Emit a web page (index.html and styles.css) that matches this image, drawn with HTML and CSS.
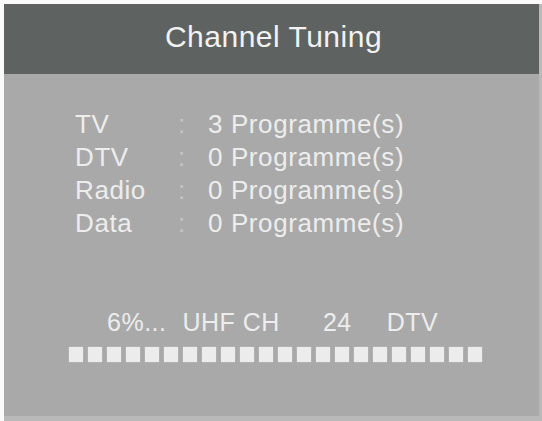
FILE: index.html
```html
<!DOCTYPE html>
<html>
<head>
<meta charset="utf-8">
<link rel="stylesheet" href="styles.css">
</head>
<body>
<div class="frame">
  <div class="panel">
    <div class="header">Channel Tuning</div>
    <div class="content">
      <div class="rows">
        <span class="label">TV</span><span class="colon">:</span><span class="value">3 Programme(s)</span>
        <span class="label">DTV</span><span class="colon">:</span><span class="value">0 Programme(s)</span>
        <span class="label">Radio</span><span class="colon">:</span><span class="value">0 Programme(s)</span>
        <span class="label">Data</span><span class="colon">:</span><span class="value">0 Programme(s)</span>
      </div>
      <div class="status">
        <span class="pct">6%...</span>
        <span class="band">UHF CH</span>
        <span class="chan">24</span>
        <span class="kind">DTV</span>
      </div>
      <div class="bar">
        <span class="cell"></span><span class="cell"></span><span class="cell"></span><span class="cell"></span>
        <span class="cell"></span><span class="cell"></span><span class="cell"></span><span class="cell"></span>
        <span class="cell"></span><span class="cell"></span><span class="cell"></span><span class="cell"></span>
        <span class="cell"></span><span class="cell"></span><span class="cell"></span><span class="cell"></span>
        <span class="cell"></span><span class="cell"></span><span class="cell"></span><span class="cell"></span>
        <span class="cell"></span><span class="cell"></span>
      </div>
    </div>
  </div>
</div>
</body>
</html>
```

FILE: styles.css
```css
html, body {
  margin: 0;
  padding: 0;
  background: #fafafa;
}
body {
  width: 542px;
  height: 421px;
  overflow: hidden;
  font-family: "Liberation Sans", Arial, sans-serif;
}
.frame {
  margin: 4px 0 0 4px;
  width: 538px;
  height: 417px;
  background: #b9b9b9;
}
.panel {
  width: 535px;
  height: 412px;
  background: #a9a9a9;
  display: flex;
  flex-direction: column;
}
.header {
  height: 70px;
  background: #5e6362;
  color: #f2f2f2;
  font-size: 30px;
  letter-spacing: 0.5px;
  display: flex;
  align-items: center;
  justify-content: center;
  padding-left: 4px;
  padding-bottom: 5px;
  box-sizing: border-box;
}
.content {
  display: flex;
  flex-direction: column;
  padding-top: 34px;
}
.rows {
  display: grid;
  grid-template-columns: 103px 30px auto;
  padding-left: 71px;
  font-size: 26px;
  line-height: 33px;
  letter-spacing: 0.6px;
  color: #ededed;
}
.colon {
  color: #c6c6c6;
}
.status {
  display: flex;
  margin-top: 67px;
  padding-left: 103px;
  font-size: 25px;
  line-height: 30px;
  letter-spacing: 0.5px;
  color: #ededed;
}
.band {
  margin-left: 16px;
}
.chan {
  margin-left: 43px;
}
.kind {
  margin-left: 35px;
}
.bar {
  display: flex;
  gap: 5px;
  margin-top: 10px;
  padding-left: 65px;
}
.cell {
  width: 14px;
  height: 15px;
  background: #ececec;
  box-shadow: 0 0 1px #dcdcdc;
}
```
